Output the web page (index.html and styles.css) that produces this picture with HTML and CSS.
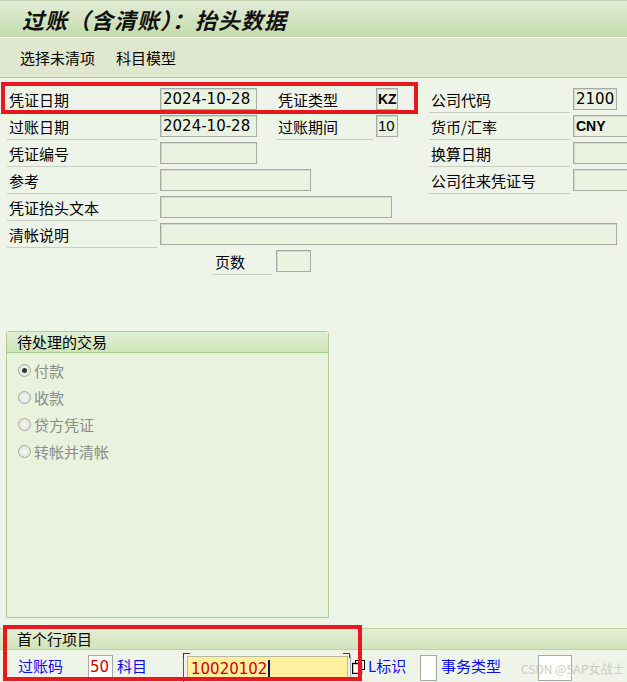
FILE: index.html
```html
<!DOCTYPE html>
<html lang="zh">
<head>
<meta charset="utf-8">
<title>过账（含清账）：抬头数据</title>
<link rel="stylesheet" href="styles.css">
</head>
<body>
<div class="screen">
  <div class="titlebar">过账（含清账）：抬头数据</div>
  <div class="toolbar">
    <span class="tb-item">选择未清项</span>
    <span class="tb-item">科目模型</span>
  </div>

  <div class="form">
    <div class="row">
      <div class="grp-a"><span class="lbl w150">凭证日期</span><span class="fld w96">2024-10-28</span></div>
      <div class="grp-b"><span class="lbl w97">凭证类型</span><span class="fld w22 narrow bold">KZ</span></div>
      <div class="grp-c"><span class="lbl w141">公司代码</span><span class="fld w44">2100</span></div>
    </div>
    <div class="row">
      <div class="grp-a"><span class="lbl w150">过账日期</span><span class="fld w96">2024-10-28</span></div>
      <div class="grp-b"><span class="lbl w97">过账期间</span><span class="fld w22 narrow">10</span></div>
      <div class="grp-c"><span class="lbl w141">货币/汇率</span><span class="fld w60 narrow bold">CNY</span></div>
    </div>
    <div class="row">
      <div class="grp-a"><span class="lbl w150">凭证编号</span><span class="fld w96"></span></div>
      <div class="grp-b"></div>
      <div class="grp-c"><span class="lbl w141">换算日期</span><span class="fld w60"></span></div>
    </div>
    <div class="row">
      <div class="grp-ab"><span class="lbl w150">参考</span><span class="fld w150"></span></div>
      <div class="grp-c"><span class="lbl w141">公司往来凭证号</span><span class="fld w60"></span></div>
    </div>
    <div class="row">
      <span class="lbl w150">凭证抬头文本</span><span class="fld w231"></span>
    </div>
    <div class="row">
      <span class="lbl w150">清帐说明</span><span class="fld w456"></span>
    </div>
    <div class="row">
      <span class="spacer205"></span><span class="lbl w60">页数</span><span class="fld w34"></span>
    </div>
  </div>

  <div class="groupbox">
    <div class="gb-head">待处理的交易</div>
    <div class="gb-body">
      <div class="radio"><span class="circle on"></span>付款</div>
      <div class="radio"><span class="circle"></span>收款</div>
      <div class="radio"><span class="circle"></span>贷方凭证</div>
      <div class="radio"><span class="circle"></span>转帐并清帐</div>
    </div>
  </div>

  <div class="lineitem">
    <div class="li-head">首个行项目</div>
    <div class="li-row">
      <span class="blue lbl-pk">过账码</span>
      <span class="wfld w25 red">50</span>
      <span class="blue lbl-acct">科目</span>
      <span class="acct-wrap">
        <span class="yfld red">10020102<span class="cursor"></span></span>
      </span>
      <span class="chk"><svg width="13" height="14" viewBox="0 0 13 14"><rect x="3.5" y="0.5" width="9" height="9" fill="#fff" stroke="#000"/><rect x="0.5" y="3.5" width="9" height="10" fill="#fff" stroke="#000" stroke-width="1.4"/></svg></span>
      <span class="blue lbl-l">L标识</span>
      <span class="wfld w17"></span>
      <span class="blue lbl-tt">事务类型</span>
      <span class="wfld w34 last"></span>
    </div>
  </div>

  <div class="mark mark1"></div>
  <div class="mark mark2"></div>
  <div class="watermark">CSDN @SAP女战士</div>
</div>
</body>
</html>
```

FILE: styles.css
```css
html, body {
  margin: 0;
  padding: 0;
}
body {
  background: #eff4e8;
  font-family: "Noto Sans CJK SC", "Noto Sans", sans-serif;
  font-size: 15px;
  color: #000;
}
.screen {
  position: relative;
  width: 627px;
  height: 682px;
  overflow: hidden;
  background: #eff4e8;
}
.titlebar {
  height: 36px;
  border-top: 1px solid #c2d4ae;
  border-bottom: 1px solid #f5f9ef;
  background: linear-gradient(#e2ecd6, #c4dbac);
  padding-left: 22px;
  font-size: 22px;
  font-weight: bold;
  font-style: italic;
  line-height: 36px;
  letter-spacing: 1px;
  color: #111;
}
.toolbar {
  height: 39px;
  background: #dfe7ce;
  border-bottom: 1px solid #b6c6a6;
  display: flex;
  align-items: center;
  padding-left: 20px;
  gap: 21px;
  font-size: 15px;
}
.form {
  padding: 10px 0 0 7px;
}
.row {
  display: flex;
  height: 27px;
  align-items: flex-start;
}
.row > *, .grp-a > *, .grp-b > *, .grp-ab > *, .grp-c > * { flex-shrink: 0; }
.grp-a { width: 269px; display: flex; }
.grp-b { width: 153px; display: flex; }
.grp-ab { width: 422px; display: flex; }
.grp-c { display: flex; }
.lbl {
  box-sizing: border-box;
  height: 25px;
  border-bottom: 1px solid #c9cfc0;
  padding-left: 2px;
  line-height: 23px;
  margin-right: 3px;
  white-space: nowrap;
}
.w150 { width: 150px; }
.w97 { width: 97px; }
.w141 { width: 141px; }
.w60.lbl { width: 60px; margin-right: 4px; padding-left: 3px; }
.fld {
  box-sizing: border-box;
  height: 22px;
  border: 1px solid #a8a8a8;
  box-shadow: inset 1px 1px 0 #d4d8cc;
  background: #eaf3df;
  font-family: "DejaVu Sans", sans-serif;
  font-size: 15px;
  line-height: 20px;
  padding-left: 2px;
  white-space: nowrap;
  overflow: hidden;
}
.fld.narrow { font-family: "Liberation Sans", sans-serif; font-size: 15px; padding-left: 2px; }
.fld.w96 { width: 97px; }
.fld.w22 { width: 22px; padding-left: 1px; }
.fld.w44 { width: 44px; padding-left: 2px; }
.fld.w60 { width: 60px; }
.fld.w150 { width: 151px; }
.fld.w231 { width: 232px; }
.fld.w456 { width: 457px; }
.fld.w34 { width: 35px; }
.fld.bold { font-weight: bold; font-size: 14px; }
.spacer205 { width: 205px; }

.groupbox {
  box-sizing: border-box;
  margin: 54px 0 0 6px;
  width: 323px;
  height: 287px;
  border: 1px solid #a9cf90;
  border-radius: 3px 3px 0 0;
  background: #e9f2dd;
}
.gb-head {
  height: 20px;
  border-bottom: 1px solid #a9cf90;
  background: linear-gradient(#e3efd3, #cfe4b8);
  padding-left: 10px;
  line-height: 20px;
}
.gb-body {
  padding: 4px 0 0 11px;
}
.radio {
  display: flex;
  align-items: center;
  height: 27px;
  color: #8c8c8c;
}
.circle {
  box-sizing: border-box;
  width: 13px;
  height: 13px;
  border-radius: 50%;
  border: 1px solid #a8a8a8;
  background: radial-gradient(#f4f6f0, #dcdfd6);
  margin-right: 3px;
  display: flex;
  align-items: center;
  justify-content: center;
}
.circle.on::after {
  content: "";
  width: 5px;
  height: 5px;
  border-radius: 50%;
  background: #333;
}

.lineitem {
  margin-top: 10px;
}
.li-head {
  height: 20px;
  border-top: 1px solid #b9d4a0;
  border-bottom: 1px solid #b9d4a0;
  background: linear-gradient(#e3eed5, #d0e3bb);
  padding-left: 17px;
  line-height: 20px;
}
.li-row {
  display: flex;
  align-items: flex-start;
  height: 33px;
  padding-top: 5px;
  box-sizing: border-box;
  padding-left: 18px;
}
.li-row > * { flex-shrink: 0; }
.blue { color: #0a0aff; line-height: 22px; white-space: nowrap; }
.lbl-pk { width: 70px; }
.lbl-acct { width: 66px; margin-left: 4px; }
.lbl-l { width: 52px; }
.lbl-tt { width: 97px; margin-left: 4px; }
.red { color: #d00000; }
.wfld {
  box-sizing: border-box;
  height: 26px;
  border: 1px solid #a8a8a8;
  background: #fff;
  font-family: "DejaVu Sans", sans-serif;
  font-size: 15px;
  line-height: 22px;
  padding-left: 2px;
}
.wfld.w25 { width: 25px; padding-left: 1px; }
.wfld.w17 { width: 17px; }
.wfld.w34 { width: 34px; }
.acct-wrap {
  position: relative;
  width: 167px;
  height: 30px;
  padding-left: 3px;
  padding-top: 1px;
  box-sizing: border-box;
  border-left: 1px solid #705050;
}
.acct-wrap::before,
.acct-wrap::after {
  content: "";
  position: absolute;
  top: -2px;
  width: 6px;
  height: 4px;
  border-top: 1px solid #c00000;
}
.acct-wrap::before { left: -1px; border-left: 1px solid #c00000; }
.acct-wrap::after { right: 0; border-right: 1px solid #c00000; }
.yfld {
  display: flex;
  align-items: center;
  box-sizing: border-box;
  width: 161px;
  height: 25px;
  border: 1px solid #b8b8a0;
  background: #fff0a0;
  font-family: "DejaVu Sans", sans-serif;
  font-size: 15px;
  padding-left: 3px;
}
.cursor {
  display: inline-block;
  width: 2px;
  height: 17px;
  background: #10105a;
  margin-left: 1px;
}
.chk {
  width: 18px;
  padding-top: 5px;
  border-left: 1px solid #a8a8a8;
  height: 22px;
  box-sizing: border-box;
  padding-left: 1px;
}
.chk svg { display: block; }

.mark {
  position: absolute;
  border: 4px solid #e8191e;
  box-sizing: border-box;
}
.mark1 { left: 1px; top: 82px; width: 417px; height: 32px; }
.mark2 { left: 3px; top: 625px; width: 359px; height: 56px; }
.watermark {
  position: absolute;
  left: 521px;
  top: 660px;
  font-size: 12px;
  color: #c9cdc4;
  white-space: nowrap;
}
```
